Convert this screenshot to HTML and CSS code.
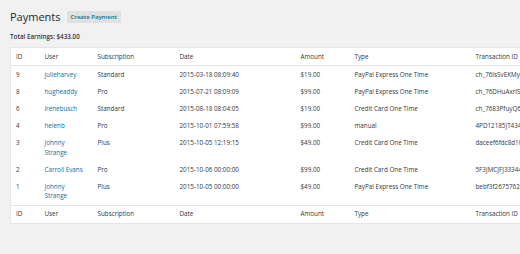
FILE: index.html
```html
<!DOCTYPE html>
<html lang="en">
<head>
  <meta charset="UTF-8">
  <meta name="viewport" content="width=device-width, initial-scale=1.0">
  <title>Payments</title>
  <link rel="stylesheet" href="styles.css">
</head>
<body>

<div class="wrap">
  <div class="page-head">
    <h1>Payments</h1>
    <a href="#" class="add-new">Create Payment</a>
  </div>

  <p class="total"><strong>Total Earnings: $433.00</strong></p>

  <table class="payments">
    <colgroup>
      <col class="c-id">
      <col class="c-user">
      <col class="c-sub">
      <col class="c-date">
      <col class="c-amount">
      <col class="c-type">
      <col class="c-txn">
    </colgroup>
    <thead>
      <tr>
        <th>ID</th>
        <th>User</th>
        <th>Subscription</th>
        <th>Date</th>
        <th>Amount</th>
        <th>Type</th>
        <th>Transaction ID</th>
      </tr>
    </thead>
    <tbody>
      <tr>
        <td>9</td>
        <td><a href="#">julieharvey</a></td>
        <td>Standard</td>
        <td>2015-03-18 08:09:40</td>
        <td>$19.00</td>
        <td>PayPal Express One Time</td>
        <td>ch_76IsSvEKMyQz</td>
      </tr>
      <tr>
        <td>8</td>
        <td><a href="#">hugheaddy</a></td>
        <td>Pro</td>
        <td>2015-07-21 08:09:09</td>
        <td>$99.00</td>
        <td>PayPal Express One Time</td>
        <td>ch_76DHuAxrlS8k</td>
      </tr>
      <tr>
        <td>6</td>
        <td><a href="#">irenebusch</a></td>
        <td>Standard</td>
        <td>2015-08-18 08:04:05</td>
        <td>$19.00</td>
        <td>Credit Card One Time</td>
        <td>ch_7683PfuyQ6tw</td>
      </tr>
      <tr>
        <td>4</td>
        <td><a href="#">helenb</a></td>
        <td>Pro</td>
        <td>2015-10-01 07:59:58</td>
        <td>$99.00</td>
        <td>manual</td>
        <td>4PD12185JT434</td>
      </tr>
      <tr>
        <td>3</td>
        <td><a href="#">Johnny<br>Strange</a></td>
        <td>Plus</td>
        <td>2015-10-05 12:19:15</td>
        <td>$49.00</td>
        <td>Credit Card One Time</td>
        <td>daceef6fdc8d10</td>
      </tr>
      <tr>
        <td>2</td>
        <td><a href="#">Carroll Evans</a></td>
        <td>Pro</td>
        <td>2015-10-06 00:00:00</td>
        <td>$99.00</td>
        <td>Credit Card One Time</td>
        <td>5F3JMCJFJ33344</td>
      </tr>
      <tr>
        <td>1</td>
        <td><a href="#">Johnny<br>Strange</a></td>
        <td>Plus</td>
        <td>2015-10-05 00:00:00</td>
        <td>$49.00</td>
        <td>PayPal Express One Time</td>
        <td>bebf3f2675762a</td>
      </tr>
    </tbody>
    <tfoot>
      <tr>
        <th>ID</th>
        <th>User</th>
        <th>Subscription</th>
        <th>Date</th>
        <th>Amount</th>
        <th>Type</th>
        <th>Transaction ID</th>
      </tr>
    </tfoot>
  </table>
</div>

</body>
</html>
```

FILE: styles.css
```css
html {
  overflow: hidden;
}

body {
  margin: 0;
  font-family: "Open Sans", "Liberation Sans", sans-serif;
  font-size: 6.3px;
  color: #32373c;
  background-color: #f1f1f1;
}

.wrap {
  width: 560px;
  padding: 9px 0 0 10px;
}

.page-head {
  display: flex;
  align-items: center;
  gap: 6px;
  height: 15px;
}

h1 {
  margin: 0;
  font-size: 11px;
  font-weight: 400;
  line-height: 15px;
  color: #23282d;
}

.add-new {
  display: inline-block;
  padding: 2px 4px;
  background-color: #e0e0e0;
  color: #0074a2;
  font-size: 6px;
  font-weight: 600;
  line-height: 8px;
  text-decoration: none;
}

.total {
  margin: 9px 0 0 0;
  line-height: 8px;
}

.total strong {
  font-weight: 600;
}

.payments {
  margin-top: 6px;
  width: 560px;
  table-layout: fixed;
  border-collapse: collapse;
  background-color: white;
  border: 1px solid #e5e5e5;
  box-shadow: 0 1px 1px rgba(0, 0, 0, 0.04);
}

.c-id { width: 29px; }
.c-user { width: 53px; }
.c-sub { width: 82px; }
.c-date { width: 121px; }
.c-amount { width: 54px; }
.c-type { width: 121px; }
.c-txn { width: 100px; }

th, td {
  padding: 3.9px 5px 3.8px;
  text-align: left;
  vertical-align: top;
  line-height: 9.4px;
  font-weight: 400;
  white-space: nowrap;
  overflow: hidden;
  color: #32373c;
}

thead th {
  border-bottom: 1px solid #e5e5e5;
}

tfoot th {
  border-top: 1px solid #e5e5e5;
}

td a {
  color: #0073aa;
  text-decoration: none;
}
```
